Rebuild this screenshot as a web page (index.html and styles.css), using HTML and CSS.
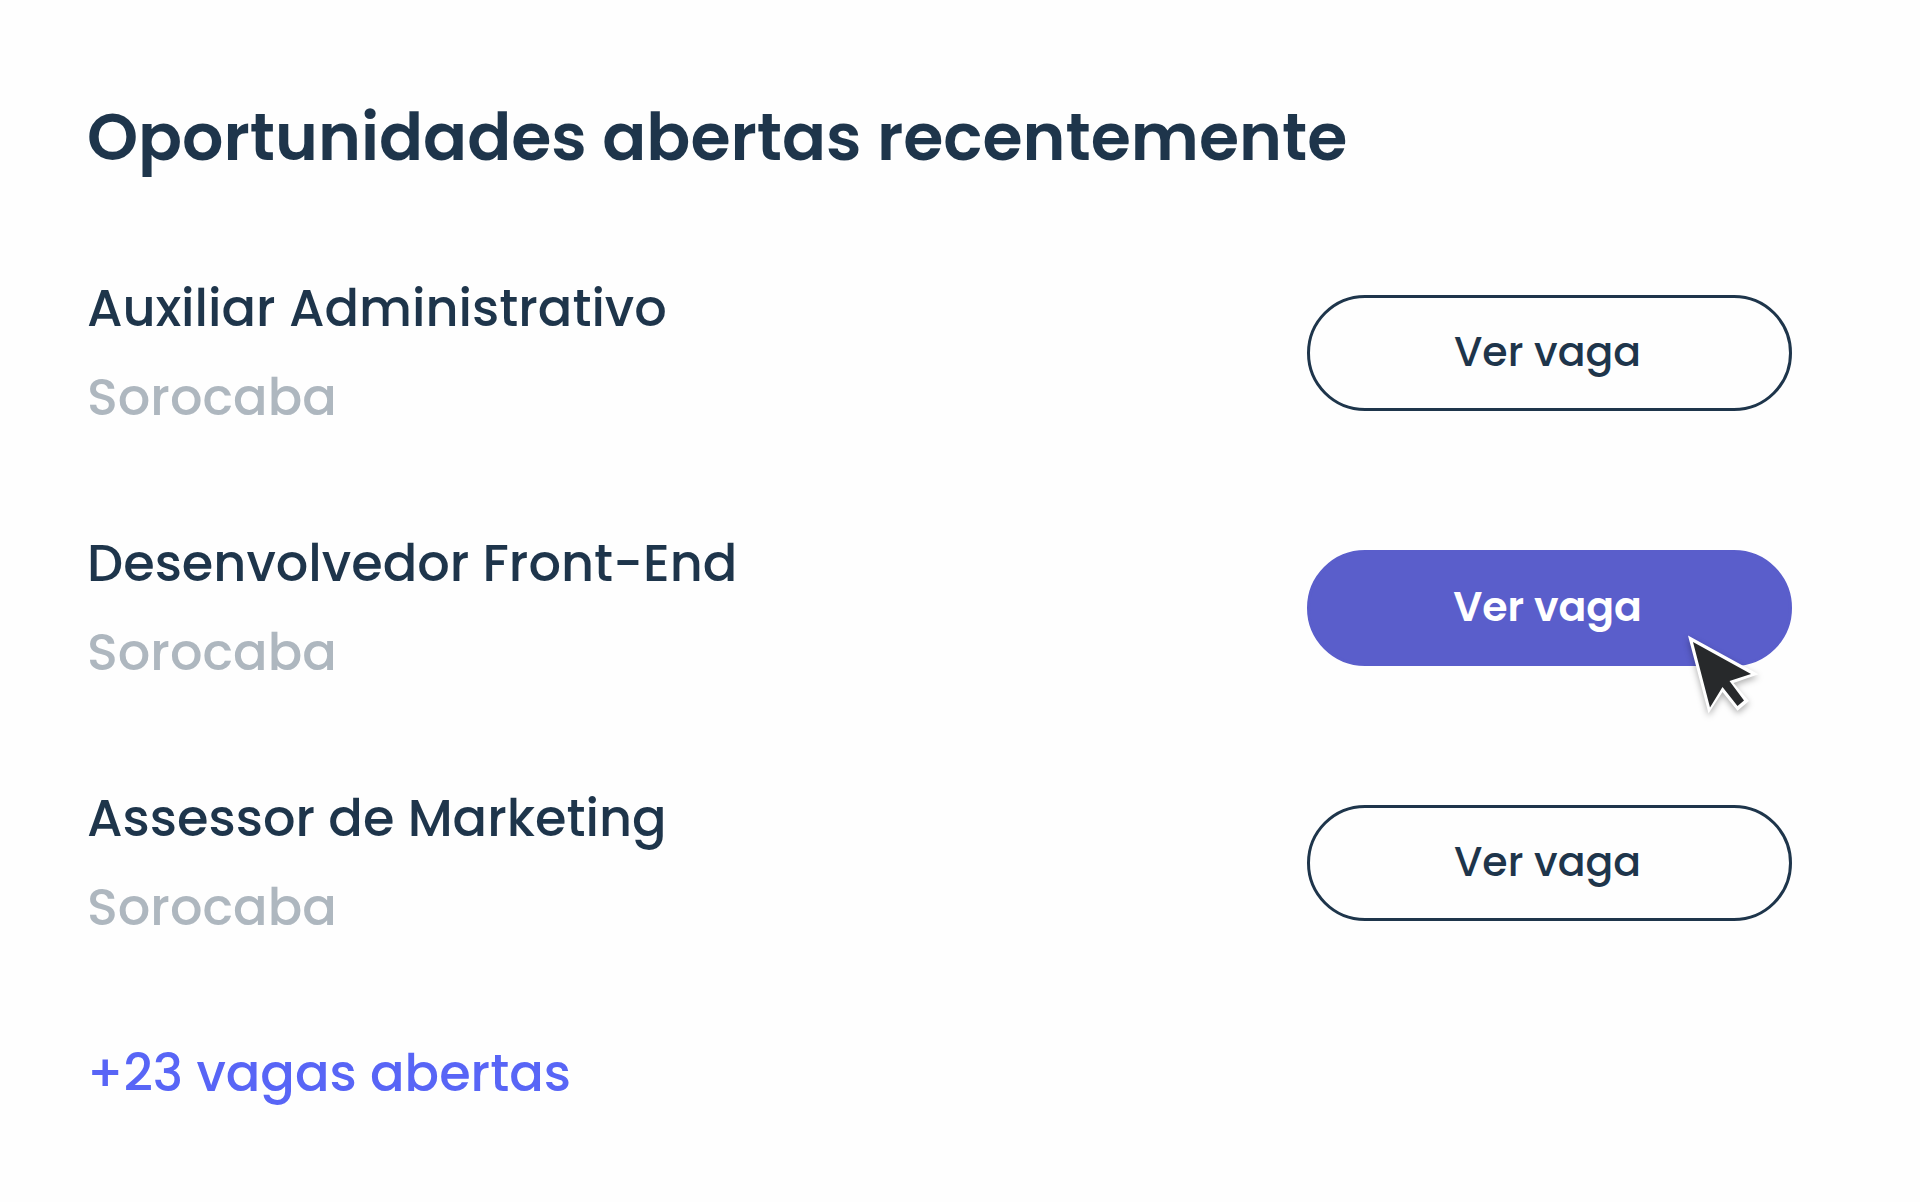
FILE: index.html
```html
<!DOCTYPE html>
<html lang="pt-BR">
<head>
  <meta charset="UTF-8" />
  <meta name="viewport" content="width=device-width, initial-scale=1.0"/>
  <title>Oportunidades abertas recentemente</title>
  <link rel="stylesheet" href="styles.css">
</head>
<body>
  <main class="container">
    <h1>Oportunidades abertas recentemente</h1>
    <ul class="job-list">
      <li class="job">
        <div class="job-info">
          <h2>Auxiliar Administrativo</h2>
          <p>Sorocaba</p>
        </div>
        <button type="button" class="btn">Ver vaga</button>
      </li>
      <li class="job">
        <div class="job-info">
          <h2>Desenvolvedor Front-End</h2>
          <p>Sorocaba</p>
        </div>
        <button type="button" class="btn btn-active">Ver vaga
          <svg class="cursor" viewBox="0 0 110 110" aria-hidden="true">
            <path d="M18 15.500 L88.500 54.300 L63.500 63 L79 81 L67.500 90.800 L52.500 72 L38.500 93.500 Z" fill="#fff"/>
            <path d="M23 22 L81 54 L59.500 61 L74 80.500 L67.500 86 L52.500 67 L40 87.500 Z" fill="#27292b"/>
          </svg>
        </button>
      </li>
      <li class="job">
        <div class="job-info">
          <h2>Assessor de Marketing</h2>
          <p>Sorocaba</p>
        </div>
        <button type="button" class="btn">Ver vaga</button>
      </li>
    </ul>
    <a href="#" class="more-link">+23 vagas abertas</a>
  </main>
</body>
</html>
```

FILE: styles.css
```css
* {
  margin: 0;
  padding: 0;
  box-sizing: border-box;
  font-family: Poppins, Inter, "Open Sans", sans-serif;
}

body {
  background: #fefefe;
  color: #1e354b;
  min-height: 100vh;
}

.container {
  padding: 90px 128px 80px 87px;
}

h1 {
  font-size: 65px;
  line-height: 96px;
  font-weight: 600;
  margin-bottom: 78px;
}

.job-list {
  list-style: none;
  display: flex;
  flex-direction: column;
  gap: 77px;
  margin-bottom: 77px;
}

.job {
  display: flex;
  justify-content: space-between;
  align-items: center;
}

.job-info h2,
.job-info p,
.more-link {
  font-size: 51px;
  line-height: 89px;
  font-weight: 500;
}

.job-info p {
  color: #aeb7bf;
}

.btn {
  position: relative;
  width: 485px;
  height: 116px;
  padding: 0 4px 4px 0;
  border: 3px solid #1e354b;
  border-radius: 58px;
  background: transparent;
  color: #1e354b;
  font-size: 41px;
  font-weight: 500;
  cursor: pointer;
}

.btn:hover,
.btn-active {
  background: #5a5ecb;
  border-color: #5a5ecb;
  color: #fff;
  font-weight: 600;
}

/* pointer over the highlighted button */
.cursor {
  position: absolute;
  right: 9px;
  bottom: -67px;
  width: 110px;
  height: 110px;
  filter: drop-shadow(0 3px 3px rgba(0, 0, 0, 0.3));
}

.more-link {
  display: inline-block;
  color: #5865f6;
  text-decoration: none;
}
```
